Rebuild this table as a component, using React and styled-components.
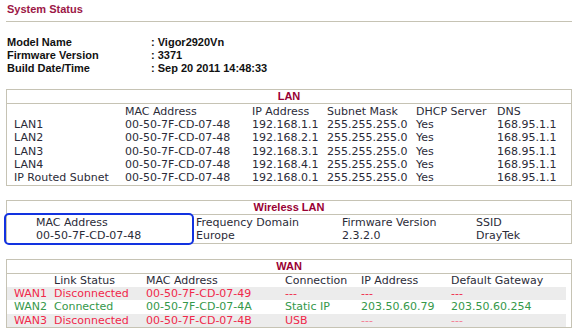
import React from "react";
import styled, { createGlobalStyle } from "styled-components";

const Global = createGlobalStyle`
  html, body { margin: 0; padding: 0; background: #ffffff; }
  body { font-family: "DejaVu Sans", Verdana, sans-serif; }
`;

const LINE = "#c6c3b4";
const RED = "#f0284a";
const GREEN = "#35984a";

const Page = styled.main`
  width: 578px;
  height: 334px;
  box-sizing: border-box;
  padding: 3px 6px 0 6px;
  overflow: hidden;
`;

const Title = styled.h1`
  margin: 0;
  padding-left: 1px;
  font: bold 11px/13px "Liberation Sans", Arial, sans-serif;
  color: #9c1746;
`;

const Rule = styled.hr`
  margin: 5px 0 0;
  border: 0;
  height: 1px;
  background: ${LINE};
`;

const Info = styled.dl`
  margin: 14px 0 0;
  padding-left: 1px;
  display: grid;
  grid-template-columns: 144px 1fr;
  font: bold 11px/13.2px "Liberation Sans", Arial, sans-serif;
  color: #111111;
`;

const InfoLabel = styled.dt`
  margin: 0;
`;

const InfoValue = styled.dd`
  margin: 0;
`;

const Panel = styled.section`
  position: relative;
  margin-top: ${(p) => p.$gap}px;
  border: 1px solid ${LINE};
  font: 11px/13.33px "DejaVu Sans", Verdana, sans-serif;
  color: #2b2b38;
`;

const PanelHead = styled.h2`
  margin: 0;
  height: 13px;
  border-bottom: 1px solid ${LINE};
  text-align: center;
  font: bold 11px/13px "Liberation Sans", Arial, sans-serif;
  color: #990033;
`;

const PanelBody = styled.div`
  padding-top: ${(p) => p.$top || 0}px;
`;

const Row = styled.div`
  display: grid;
  grid-template-columns: ${(p) => p.$cols};
  padding-left: ${(p) => p.$indent}px;
  margin-right: ${(p) => p.$trim || 0}px;
  height: 13.33px;
  white-space: nowrap;
  background: ${(p) => (p.$shade ? "#ececec" : "transparent")};
  color: ${(p) => (p.$tone === "bad" ? RED : p.$tone === "good" ? GREEN : "inherit")};
`;

const Cell = styled.span`
  overflow: visible;
  color: ${(p) => (p.$dim ? "#f47d93" : "inherit")};
`;

const Highlight = styled.div`
  position: absolute;
  left: -3px;
  top: 12px;
  width: 190px;
  height: 32px;
  box-sizing: border-box;
  border: 2px solid #1232e0;
  border-radius: 5px;
  pointer-events: none;
`;

const LAN_COLS = "111px 127px 75px 89px 81px 1fr";
const WLAN_COLS = "160px 146px 134px 1fr";
const WAN_COLS = "40px 92px 139px 76px 90px 1fr";

const mac = "00-50-7F-CD-07-48";

const lanRows = [
  ["", "MAC Address", "IP Address", "Subnet Mask", "DHCP Server", "DNS"],
  ["LAN1", mac, "192.168.1.1", "255.255.255.0", "Yes", "168.95.1.1"],
  ["LAN2", mac, "192.168.2.1", "255.255.255.0", "Yes", "168.95.1.1"],
  ["LAN3", mac, "192.168.3.1", "255.255.255.0", "Yes", "168.95.1.1"],
  ["LAN4", mac, "192.168.4.1", "255.255.255.0", "Yes", "168.95.1.1"],
  ["IP Routed Subnet", mac, "192.168.0.1", "255.255.255.0", "Yes", "168.95.1.1"],
];

const wlanRows = [
  ["MAC Address", "Frequency Domain", "Firmware Version", "SSID"],
  [mac, "Europe", "2.3.2.0", "DrayTek"],
];

const wanRows = [
  { cells: ["", "Link Status", "MAC Address", "Connection", "IP Address", "Default Gateway"] },
  {
    tone: "bad",
    shade: true,
    cells: ["WAN1", "Disconnected", "00-50-7F-CD-07-49", "---", "---", "---"],
  },
  {
    tone: "good",
    cells: ["WAN2", "Connected", "00-50-7F-CD-07-4A", "Static IP", "203.50.60.79", "203.50.60.254"],
  },
  {
    tone: "bad",
    shade: true,
    dimFrom: 4,
    cells: ["WAN3", "Disconnected", "00-50-7F-CD-07-4B", "USB", "---", "---"],
  },
];

const info = [
  ["Model Name", ": Vigor2920Vn"],
  ["Firmware Version", ": 3371"],
  ["Build Date/Time", ": Sep 20 2011 14:48:33"],
];

export default function App() {
  return (
    <>
      <Global />
      <Page>
        <Title>System Status</Title>
        <Rule />
        <Info>
          {info.map(([k, v]) => (
            <React.Fragment key={k}>
              <InfoLabel>{k}</InfoLabel>
              <InfoValue>{v}</InfoValue>
            </React.Fragment>
          ))}
        </Info>

        <Panel $gap={13}>
          <PanelHead>LAN</PanelHead>
          <PanelBody $top={1}>
            {lanRows.map((r, i) => (
              <Row key={i} $cols={LAN_COLS} $indent={7}>
                {r.map((c, j) => (
                  <Cell key={j}>{c}</Cell>
                ))}
              </Row>
            ))}
          </PanelBody>
        </Panel>

        <Panel $gap={14}>
          <PanelHead>Wireless LAN</PanelHead>
          <PanelBody $top={1.5}>
            {wlanRows.map((r, i) => (
              <Row key={i} $cols={WLAN_COLS} $indent={29}>
                {r.map((c, j) => (
                  <Cell key={j}>{c}</Cell>
                ))}
              </Row>
            ))}
          </PanelBody>
          <Highlight />
        </Panel>

        <Panel $gap={15}>
          <PanelHead>WAN</PanelHead>
          <PanelBody>
            {wanRows.map((r, i) => (
              <Row
                key={i}
                $cols={WAN_COLS}
                $indent={7}
                $trim={5}
                $shade={r.shade}
                $tone={r.tone}
              >
                {r.cells.map((c, j) => (
                  <Cell key={j} $dim={r.dimFrom !== undefined && j >= r.dimFrom}>
                    {c}
                  </Cell>
                ))}
              </Row>
            ))}
          </PanelBody>
        </Panel>
      </Page>
    </>
  );
}
